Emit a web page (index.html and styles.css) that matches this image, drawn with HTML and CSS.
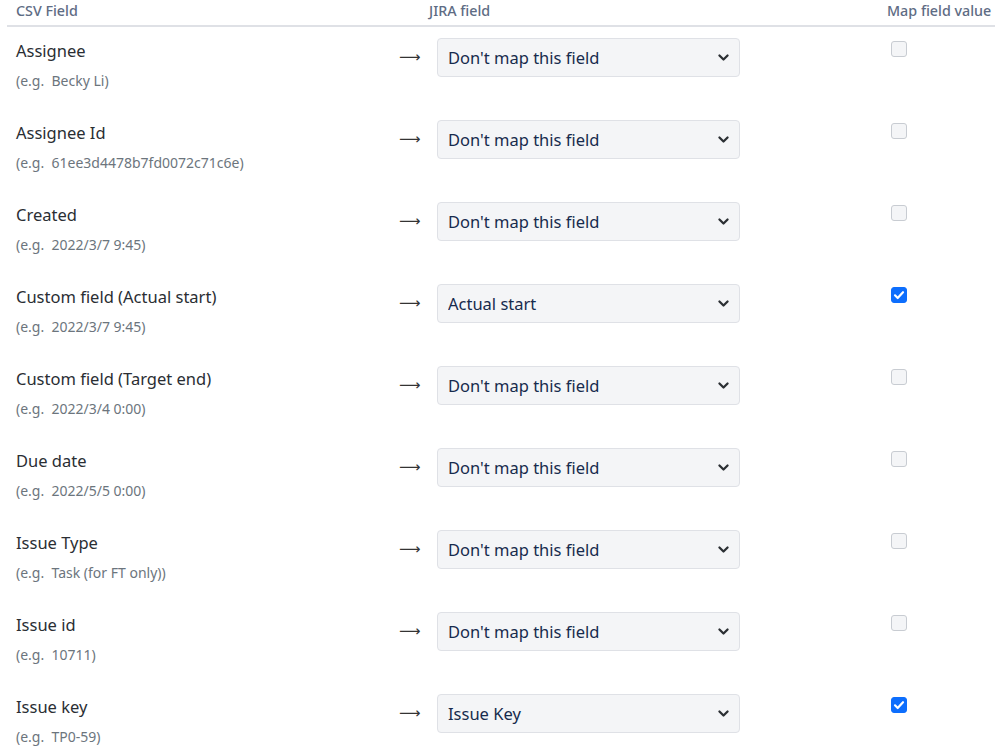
FILE: index.html
```html
<!DOCTYPE html>
<html lang="en">
<head>
  <meta charset="UTF-8" />
  <title>CSV field mapping</title>
  <link rel="stylesheet" href="styles.css">
</head>
<body>

  <table class="mapping">
    <thead>
      <tr>
        <th class="col-csv">CSV Field</th>
        <th class="col-arrow"></th>
        <th class="col-jira">JIRA field</th>
        <th class="col-value">Map field value</th>
      </tr>
    </thead>
    <tbody id="rows"></tbody>
  </table>

  <script src="rows.js"></script>
</body>
</html>
```

FILE: rows.js
```js
const fields = [
  ["Assignee", "Becky Li", "Don't map this field", false],
  ["Assignee Id", "61ee3d4478b7fd0072c71c6e", "Don't map this field", false],
  ["Created", "2022/3/7 9:45", "Don't map this field", false],
  ["Custom field (Actual start)", "2022/3/7 9:45", "Actual start", true],
  ["Custom field (Target end)", "2022/3/4 0:00", "Don't map this field", false],
  ["Due date", "2022/5/5 0:00", "Don't map this field", false],
  ["Issue Type", "Task (for FT only)", "Don't map this field", false],
  ["Issue id", "10711", "Don't map this field", false],
  ["Issue key", "TP0-59", "Issue Key", true]
];

const chevron = '<svg class="chevron" viewBox="0 0 16 16" width="13" height="13"><path d="M3 5.5l5 5 5-5" fill="none" stroke="#2b2f33" stroke-width="2.8" stroke-linecap="round" stroke-linejoin="round"/></svg>';
const tick = '<svg class="tick" viewBox="0 0 16 16" width="16" height="16"><path d="M4 8.3l2.7 2.7L12 5.2" fill="none" stroke="#fff" stroke-width="2.2" stroke-linecap="round" stroke-linejoin="round"/></svg>';

const tbody = document.getElementById("rows");

fields.forEach(([name, example, mapped, checked]) => {
  const options = mapped === "Don't map this field"
    ? "<option>Don't map this field</option>"
    : "<option>Don't map this field</option><option selected>" + mapped + "</option>";
  const tr = document.createElement("tr");
  tr.innerHTML =
    '<td class="col-csv"><div class="field-name">' + name + '</div>' +
    '<div class="field-example">(e.g.&nbsp; ' + example + ')</div></td>' +
    '<td class="col-arrow"><span class="arrow">&#x27F6;</span></td>' +
    '<td class="col-jira"><div class="select-wrap"><select>' + options + '</select>' + chevron + '</div></td>' +
    '<td class="col-value"><span class="check-wrap"><input type="checkbox"' + (checked ? " checked" : "") + '>' +
    (checked ? tick : "") + '</span></td>';
  tbody.appendChild(tr);
});
```

FILE: styles.css
```css
body {
  margin: 0;
  padding: 0 4px 0 7px;
  font-family: "Noto Sans", "Open Sans", sans-serif;
  background-color: #fff;
  color: #212529;
}

.mapping {
  width: 988px;
  border-collapse: collapse;
  table-layout: fixed;
}

.mapping th {
  height: 25px;
  padding: 0 9px;
  font-size: 14.3px;
  font-weight: 500;
  color: #5e6c84;
  text-align: left;
  vertical-align: top;
  line-height: 22px;
  white-space: nowrap;
  border-bottom: 2px solid #dfe1e6;
}

.mapping td {
  vertical-align: top;
  padding: 11px 9px 0;
  height: 71px;
}

.col-csv { width: 365px; }
.col-arrow { width: 12px; }
.col-jira { width: 440px; }

.field-name {
  font-size: 16.5px;
  line-height: 24px;
  margin-top: 1px;
  color: #2a2e33;
}

.field-example {
  margin-top: 7px;
  font-size: 14px;
  line-height: 21px;
  color: #6c757d;
}

.arrow {
  display: block;
  margin-top: 10px;
  font-family: "DejaVu Sans", sans-serif;
  font-size: 15px;
  color: #333;
  white-space: nowrap;
}

.select-wrap {
  position: relative;
  width: 303px;
  margin-left: 8px;
}

.select-wrap select {
  -webkit-appearance: none;
  appearance: none;
  width: 100%;
  height: 39px;
  padding: 0 36px 0 10px;
  font-family: inherit;
  font-size: 16.5px;
  color: #172b4d;
  background-color: #f4f5f7;
  border: 1px solid #dfe1e6;
  border-radius: 4px;
}

.chevron {
  position: absolute;
  right: 10px;
  top: 13px;
  pointer-events: none;
}

.check-wrap {
  position: relative;
  display: inline-block;
  margin-left: 4px;
  margin-top: 3px;
  width: 16px;
  height: 16px;
}

.check-wrap input {
  -webkit-appearance: none;
  appearance: none;
  display: block;
  margin: 0;
  width: 16px;
  height: 16px;
  background-color: #f4f5f7;
  border: 1px solid #c8ccd2;
  border-radius: 3px;
}

.check-wrap input:checked {
  background-color: #0d6efd;
  border-color: #0d6efd;
}

.tick {
  position: absolute;
  left: 0;
  top: 0;
  pointer-events: none;
}
```
